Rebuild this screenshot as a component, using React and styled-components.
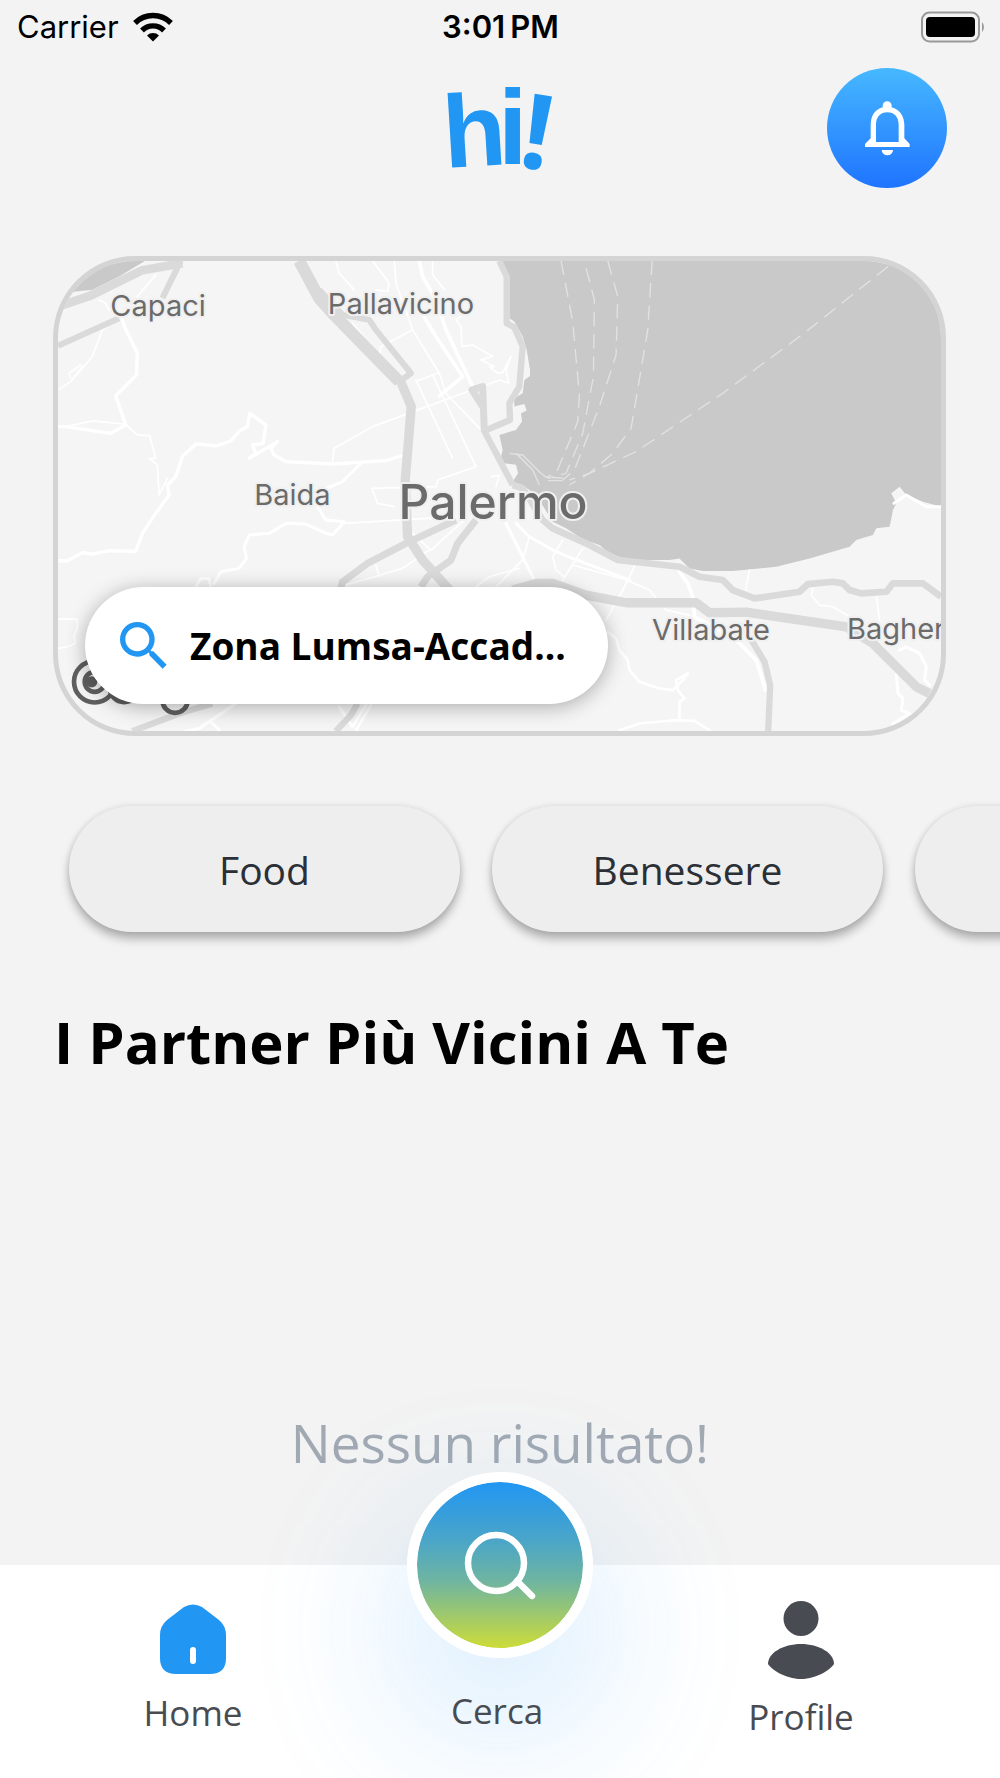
import React from "react";
import styled, { createGlobalStyle } from "styled-components";
import { MdSearch } from "react-icons/md";

const GlobalStyle = createGlobalStyle`
  *, *::before, *::after { box-sizing: border-box; }
  body { margin: 0; background: #f3f3f3; overflow-x: hidden; }
  button { border: 0; margin: 0; padding: 0; font: inherit; color: inherit; cursor: pointer; }
  svg { display: block; }
`;

const Screen = styled.div`
  display: flex;
  flex-direction: column;
  min-height: 100vh;
  overflow: hidden;
  background: #f3f3f3;
  color: #000;
  font-family: "Open Sans", "Noto Sans", sans-serif;
`;

const StatusBar = styled.div`
  display: grid;
  grid-template-columns: 1fr auto 1fr;
  align-items: center;
  height: 54px;
  padding: 0 16px 0 17px;
  font: 400 31px/36px Inter, Roboto, sans-serif;
`;

const Carrier = styled.div`
  display: flex;
  align-items: center;
  gap: 14px;
`;

const Clock = styled.time`
  font-weight: 600;
`;

const Battery = styled.svg`
  justify-self: end;
`;

const Header = styled.header`
  display: grid;
  grid-template-columns: 1fr auto 1fr;
  align-items: center;
  padding: 6px 53px 0;
`;

const Logo = styled.svg`
  grid-column: 2;
  overflow: visible;
`;

const BellButton = styled.button`
  justify-self: end;
  display: grid;
  place-items: center;
  width: 120px;
  height: 120px;
  border-radius: 50%;
  background: linear-gradient(#46b8ff, #1f74ff);
`;

const Main = styled.main`
  flex: 1;
  display: flex;
  flex-direction: column;
`;

const MapCard = styled.section`
  position: relative;
  height: 480px;
  margin: 60px 54px 0 53px;
  border: 5px solid #d4d4d4;
  border-radius: 82px;
  overflow: hidden;
  background: #f5f5f5;
`;

const MapDrawing = styled.svg`
  width: 100%;
  height: 100%;
  text {
    font-family: Inter, Roboto, sans-serif;
    fill: #6b6b6b;
    stroke: #f0f0f0;
    stroke-width: 12px;
    stroke-linejoin: round;
    paint-order: stroke;
  }
`;

const ZoneButton = styled.button`
  position: absolute;
  left: 27px;
  bottom: 27px;
  display: flex;
  align-items: center;
  gap: 14px;
  width: 523px;
  height: 117px;
  padding: 0 20px 0 27px;
  border-radius: 59px;
  background: #fff;
  color: #000;
  font-size: 37px;
  font-weight: 700;
  text-align: left;
  box-shadow: 0 3px 20px rgba(0, 0, 0, 0.3);
  svg { flex: none; color: #2196f3; }
`;

const ZoneName = styled.span`
  white-space: nowrap;
`;

const Categories = styled.nav`
  display: flex;
  gap: 32px;
  padding: 70px 0 40px 69px;
  overflow: hidden;
`;

const Category = styled.button`
  flex: none;
  width: 391px;
  height: 126px;
  border-radius: 63px;
  background: #eee;
  color: #2b2f36;
  font-size: 39px;
  box-shadow: 0 7px 10px rgba(0, 0, 0, 0.27), 0 0 6px rgba(0, 0, 0, 0.1);
`;

const Title = styled.h1`
  margin: 0 54px;
  padding-top: 32px;
  font-size: 58px;
  line-height: 76px;
  font-weight: 700;
`;

const EmptyState = styled.p`
  margin: auto 0 0;
  padding-bottom: 86px;
  text-align: center;
  font-size: 53px;
  line-height: 72px;
  color: #a1a9b3;
`;

const TabBar = styled.nav`
  position: relative;
  display: grid;
  grid-template-columns: repeat(3, 1fr);
  height: 213px;
  padding: 0 47px 0 41px;
  background: #fff;
`;

const Tab = styled.button`
  position: relative;
  z-index: 1;
  display: flex;
  flex-direction: column;
  align-items: center;
  justify-content: flex-start;
  gap: 14px;
  padding-top: ${(p) => p.$top}px;
  background: none;
  color: #484c52;
  font-size: 35px;
  line-height: 48px;
`;

const SearchButton = styled.button`
  position: absolute;
  left: 50%;
  top: 0;
  transform: translate(-50%, -50%);
  display: grid;
  place-items: center;
  width: 186px;
  height: 186px;
  border: 10px solid #fff;
  border-radius: 50%;
  background: linear-gradient(#2196f3, #4aa5c8 35%, #6fb5a0 60%, #cddc39) padding-box;
  box-shadow: 0 64px 160px 10px rgba(33, 150, 243, 0.2);
`;

const WifiIcon = () => (
  <svg width="40" height="30" viewBox="0 0 40 30" aria-hidden="true">
    <g fill="none" stroke="#000" strokeWidth="5.4">
      <path d="M2 11A25.500 25.500 0 0 1 38 11" />
      <path d="M9 18.500A15.500 15.500 0 0 1 31 18.500" />
    </g>
    <path d="M20 29.500L14 23.500A8.500 8.500 0 0 1 26 23.500Z" />
  </svg>
);

const BatteryIcon = () => (
  <Battery width="63" height="32" viewBox="0 0 63 32" role="img" aria-label="Battery">
    <rect x="1" y="1.500" width="57" height="29" rx="7.500" fill="none" stroke="#999" strokeWidth="2" />
    <rect x="5" y="6" width="49" height="20" rx="4" />
    <path d="M61 11Q63 13 63 16T61 21Z" fill="#999" />
  </Battery>
);

const HiLogo = () => (
  <Logo width="128" height="136" viewBox="436 60 128 136" role="img" aria-label="hi!">
    <g fill="#2196f3" fontFamily="Liberation Sans, sans-serif" fontWeight="700">
      <text fontSize="103" transform="translate(445 168) rotate(-3.500)">h</text>
      <text fontSize="106" x="498" y="164">i</text>
      <text fontSize="104" transform="translate(517 166) rotate(9)" fontFamily="Open Sans, sans-serif">!</text>
    </g>
  </Logo>
);

const BellIcon = () => (
  <svg width="46" height="56" viewBox="1090 301 138 168" aria-hidden="true">
    <path
      fill="#fff"
      fillRule="evenodd"
      d="M1146 323V318A13.500 13.500 0 0 1 1173 318V323C1197 329 1211 350 1211 376V416L1227 433V442H1093V433L1110 416V376C1110 350 1122 329 1146 323ZM1126 427H1194V376C1194 352 1181 338 1160 338S1126 352 1126 376Z"
    />
    <path fill="#fff" d="M1143 451H1177A17 16 0 0 1 1143 451Z" />
  </svg>
);

const PalermoMap = () => (
  <MapDrawing viewBox="57 63 2647 1410" preserveAspectRatio="xMidYMid slice" role="img" aria-label="Palermo">
    <path
      fill="#c9c9c9"
      d="M1385 63L1410 110V235L1425 245L1450 290L1462 330L1472 390V408L1455 420L1450 460L1425 475V500L1455 492L1462 512L1445 520L1448 545L1430 570L1380 585L1390 630L1385 650L1395 670L1430 674L1436 700L1420 725L1450 735L1490 765L1540 845L1580 865L1630 898L1680 915L1710 940L1770 960H1890L1920 955L1950 985L1990 993H2080L2210 980L2310 955L2430 920L2450 900L2500 885L2510 865L2550 860L2560 810L2570 790L2555 760L2580 740L2600 765L2650 785L2704 800V63Z"
    />
    <path fill="#c9c9c9" d="M57 170L110 155L160 150L240 110L318 63H57Z" />
    <g fill="none" stroke="#fff" strokeLinejoin="round" strokeLinecap="round" strokeWidth="5">
      <path strokeWidth="10" d="M250 240L258 265L295 340L292 405L230 468L260 555L215 580L80 560H57" />
      <path d="M80 560L160 543L260 553L295 585L332 588L350 655L330 655L355 675L360 765L385 715" />
      <path strokeWidth="10" d="M57 962H85L130 938L160 942L210 932L290 934L310 880L350 820L390 765L385 735L410 710L430 650L470 612L530 618L575 603L605 570L625 560L632 520L680 555L672 610L640 615L650 640L630 655L715 605L695 625L705 645L740 665L880 672L1040 662L1085 648" />
      <path d="M57 450L95 425L160 350L190 270L230 240M95 415L90 400L125 375L130 380L95 425M295 170L350 105M180 180L200 190L210 210" />
      <path d="M880 665L885 625L1000 560L1290 453" />
      <path strokeWidth="9" d="M965 670L910 725L850 750L835 800L860 840L915 845L880 885L855 878L800 852L740 850L690 880L630 885L615 920L622 955L600 985L545 995L525 1030M470 1040L485 1015H510L515 1040" />
      <path d="M915 850L1250 830M998 745L1015 790L1065 800M998 745L1190 740L1195 720L1310 680L1180 405M1130 425L1195 400M1130 420L1240 655" />
      <path strokeWidth="11" d="M1140 63L1150 110L1190 180L1220 270L1300 440M1130 190L1190 290L1270 410L1200 468" />
      <path d="M1000 63L1050 130L1045 155L1010 150M890 63L900 100L945 150M1065 63L1070 130L1120 270L1200 400L1220 460L1325 570M1020 350L1025 320L1120 270M1180 63L1180 105L1215 150M940 250L990 310L1030 370" />
      <path d="M1265 230L1250 240L1265 260L1268 320L1300 315L1360 350L1325 360L1365 380H1350L1375 400L1390 398L1415 350L1400 390L1408 430L1380 420L1340 435" />
      <path strokeWidth="9" d="M1400 850L1485 1020M1430 850L1470 890L1550 935L1600 955L1770 1020" />
      <path d="M1470 890L1450 960L1400 1010L1360 1050M1570 900L1540 950L1550 990L1575 1010M1630 925L1570 1020M1785 980L1750 1050L1700 1140M1600 975L1760 1020L1830 1050L1880 1110L1950 1125M1355 710L1380 705L1370 740M1110 870L1175 930L1280 835M920 1035L1090 985L1170 930M1010 975L1020 1010M1310 1040L1350 1010L1440 985" />
      <path strokeWidth="11" d="M1920 995L1945 1030L1960 1070L1965 1130L2080 1190L2150 1260L2178 1350" />
      <path d="M2130 990L2118 1050M2510 1065L2520 1145M2320 1045L2315 1065L2340 1095L2380 1100L2430 1130" />
      <path strokeWidth="8" d="M1705 1175L1730 1195L1740 1230L1765 1260L1770 1290L1800 1325L1860 1345L1900 1350L1930 1320L1945 1300L1910 1320L1915 1350L1935 1375L1920 1385V1440M1740 1470L1800 1450L1910 1440L1965 1442L2010 1470" />
      <path d="M57 1137H115V1165L105 1185L108 1210L85 1220L57 1225" />
      <path strokeWidth="9" d="M2580 1230L2600 1220L2640 1240L2660 1280L2655 1320L2670 1335M2570 1300L2575 1360L2590 1375L2585 1410L2610 1420L2560 1450M2563 790L2600 765L2660 800H2704" />
      <path strokeWidth="9" d="M590 1390L480 1465L440 1473M515 1445L540 1470M980 1395L940 1460L900 1400M995 1395L950 1470" />
    </g>
    <g fill="none" stroke="#dadada" strokeLinejoin="round" strokeWidth="21">
      <path strokeWidth="26" d="M57 200L155 167L310 91L430 70" />
      <path strokeWidth="18" d="M425 63L370 175M240 235L57 318" />
      <path strokeWidth="36" d="M780 63L840 175L880 220L1080 425" />
      <path strokeWidth="28" d="M1080 415L1116 500L1098 720L1105 890L1150 960L1240 1060" />
      <path strokeWidth="18" d="M840 150L910 225L990 240L1010 270L1115 400L1080 425" />
      <path strokeWidth="19" d="M1380 63L1402 110V250L1425 262L1450 320L1440 440L1410 490L1412 540L1335 573L1420 735" />
      <path d="M1335 575L1330 440L1298 450L1330 500M1250 840L1100 910L985 970L910 1025L900 1060M1310 840L1255 910L1235 960L1165 1010L1145 1040" />
      <path strokeWidth="20" d="M1420 735L1450 745L1510 840L1540 865L1640 910L1735 960L1920 980L1980 1010L2050 1020L2080 1050L2145 1075L2280 1055L2305 1032L2380 1025L2410 1030L2430 1050L2465 1060L2540 1055L2560 1030H2650L2704 1070" />
      <path strokeWidth="28" d="M1420 1050L1490 1030H1540L1640 1065L1760 1088H1970L2010 1118L2120 1116L2420 1160L2500 1210L2630 1340L2670 1360" />
      <path strokeWidth="19" d="M2130 1190L2175 1265L2192 1335L2186 1473M955 1390L935 1425L890 1473M280 1473L420 1420L520 1390" />
    </g>
    <g fill="none" stroke="#e2e2e2" strokeWidth="4" strokeDasharray="43 24">
      <path d="M1565 63L1600 245L1620 465L1615 545L1550 700L1520 712" />
      <path d="M1640 85L1665 180L1662 410L1630 580L1580 700L1525 715" />
      <path d="M1705 63L1735 170L1730 345L1680 500L1605 690L1570 720" />
      <path d="M1838 63L1825 270L1775 565L1720 640L1650 700L1590 720" />
      <path d="M2545 80L2300 275L2050 460L1790 635L1650 700L1590 735" />
      <path strokeDasharray="none" d="M1410 640L1450 645L1500 695L1520 712L1570 714M1430 640L1480 690L1500 735M1525 722H1570" />
    </g>
    <g fontSize="87">
      <text x="214" y="229">Capaci</text>
      <text x="866" y="222">Pallavicino</text>
      <text x="645" y="795">Baida</text>
      <text x="1838" y="1201">Villabate</text>
      <text x="2422" y="1198">Bagheria</text>
    </g>
    <text x="1078" y="837" fontSize="144" fontWeight="500">Palermo</text>
    <g fill="none" stroke="#5f5f5f" strokeWidth="14">
      <circle cx="167" cy="1325" r="62" />
      <circle cx="167" cy="1325" r="30" />
      <circle cx="158" cy="1325" r="10" fill="#5f5f5f" />
      <circle cx="255" cy="1343" r="43" />
      <circle cx="408" cy="1380" r="38" />
    </g>
  </MapDrawing>
);

const HomeIcon = () => (
  <svg width="68" height="72" viewBox="0 0 68 72" aria-hidden="true">
    <path fill="#2196f3" d="M25 4Q34 -1 43 4L60 17Q67 23 67 32V55Q67 71 51 71H17Q1 71 1 55V32Q1 23 8 17Z" />
    <rect x="31" y="44" width="6" height="17" rx="3" fill="#fff" />
  </svg>
);

const SearchIcon = () => (
  <svg width="74" height="70" viewBox="0 0 74 70" fill="none" stroke="#fff" strokeWidth="6.5" strokeLinecap="round" aria-hidden="true">
    <circle cx="33" cy="33" r="28" />
    <path d="M54 51L69 66" />
  </svg>
);

const ProfileIcon = () => (
  <svg width="68" height="78" viewBox="0 0 68 78" fill="#484c52" aria-hidden="true">
    <circle cx="34" cy="17.500" r="17.500" />
    <path d="M34 43C52 43 67 52 67 63C64 68 50 78 34 78S4 68 1 63C1 52 16 43 34 43Z" />
  </svg>
);

export default function App() {
  return (
    <Screen>
      <GlobalStyle />
      <StatusBar>
        <Carrier>
          Carrier
          <WifiIcon />
        </Carrier>
        <Clock>3:01{"\u2009"}PM</Clock>
        <BatteryIcon />
      </StatusBar>
      <Header>
        <HiLogo />
        <BellButton aria-label="Notifiche">
          <BellIcon />
        </BellButton>
      </Header>
      <Main>
        <MapCard>
          <PalermoMap />
          <ZoneButton>
            <MdSearch size={64} aria-hidden="true" />
            <ZoneName>Zona Lumsa-Accad...</ZoneName>
          </ZoneButton>
        </MapCard>
        <Categories>
          <Category>Food</Category>
          <Category>Benessere</Category>
          <Category aria-label="Altre categorie" />
        </Categories>
        <Title>I Partner Più Vicini A Te</Title>
        <EmptyState>Nessun risultato!</EmptyState>
      </Main>
      <TabBar>
        <Tab $top={38}>
          <HomeIcon />
          Home
        </Tab>
        <Tab $top={122}>Cerca</Tab>
        <Tab $top={36}>
          <ProfileIcon />
          Profile
        </Tab>
        <SearchButton aria-label="Cerca">
          <SearchIcon />
        </SearchButton>
      </TabBar>
    </Screen>
  );
}
